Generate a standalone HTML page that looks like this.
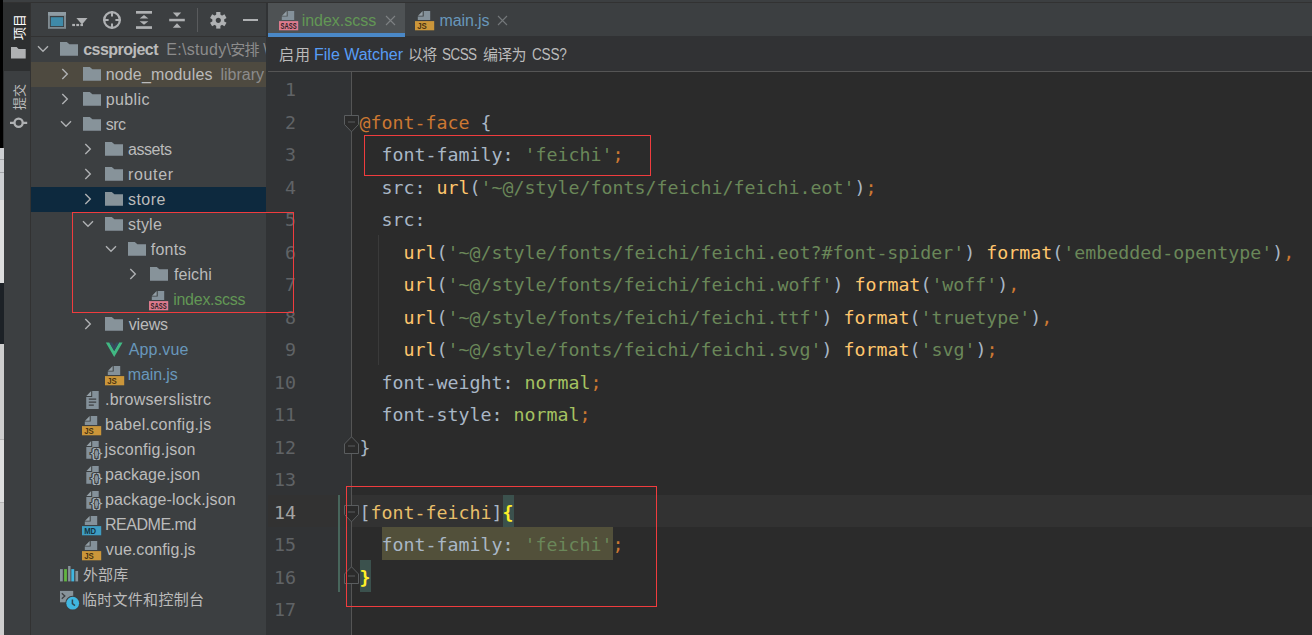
<!DOCTYPE html><html><head><meta charset="utf-8"><title>index.scss</title><style>
*{box-sizing:border-box;margin:0;padding:0}
html,body{width:1312px;height:635px;overflow:hidden;background:#3c3f41}
body{position:relative;font-family:"Liberation Sans","Noto Sans CJK SC",sans-serif;font-size:16px;color:#bbbbbb}
.abs{position:absolute}
svg{position:absolute;overflow:visible}
#edge{left:0;top:0;width:4px;height:635px;background:#cecece}
#stripe{left:4px;top:0;width:27px;height:635px;background:#3c3f41}
#proj{left:31px;top:0;width:235px;height:635px;background:#3c3f41;overflow:hidden}
#editor{left:266px;top:0;width:1046px;height:635px;background:#2b2b2b;overflow:hidden}
.t{position:absolute;white-space:pre;height:25px;line-height:25px}
.g{color:#8c8c8c}
.code{position:absolute;left:359.5px;height:32px;line-height:32px;font-family:"DejaVu Sans Mono","Liberation Mono",monospace;font-size:18.27px;white-space:pre;color:#a9b7c6}
.ln{position:absolute;left:266px;width:30px;text-align:right;height:32px;line-height:32px;font-family:"DejaVu Sans Mono","Liberation Mono",monospace;font-size:18.27px;color:#606366}
.k{color:#cc7832}.s{color:#6a8759}.f{color:#ffc66d}.v{color:#a5c261}.sel{color:#e8bf6a}
.red{position:absolute;border:1px solid #f03c3e}
.vt{position:absolute;white-space:nowrap;transform-origin:0 0;transform:rotate(-90deg);font-size:13px;line-height:16px;height:16px}
</style></head><body>
<div id="edge" class="abs"></div>
<div class="abs" style="left:0;top:0;width:4px;height:148px;background:#2c2e2f"></div>
<div class="abs" style="left:0;top:0;width:3px;height:148px;background:#000"></div>
<div class="abs" style="left:0;top:148px;width:4px;height:52px;background:#cdcfd2"></div>
<div class="abs" style="left:0;top:159px;width:4px;height:1px;background:#a3a5a8"></div>
<div class="abs" style="left:0;top:172px;width:4px;height:1px;background:#a3a5a8"></div>
<div class="abs" style="left:0;top:200px;width:4px;height:83px;background:#dedede"></div>
<div class="abs" style="left:0;top:283px;width:4px;height:61px;background:#1c2126"></div>
<div class="abs" style="left:0;top:439px;width:4px;height:63px;background:#dedede"></div>
<div class="abs" style="left:0;top:439px;width:4px;height:1px;background:#b5b5b5"></div>
<div class="abs" style="left:0;top:502px;width:4px;height:1px;background:#b5b5b5"></div>
<div id="stripe" class="abs"></div>
<div id="proj" class="abs"></div>
<div id="editor" class="abs"></div>
<div class="abs" style="left:31px;top:62px;width:235px;height:25px;background:#4e4a40"></div>
<div class="abs" style="left:31px;top:187px;width:235px;height:25px;background:#0d293e"></div>
<svg style="left:37.0px;top:45.2px" width="12" height="8" viewBox="0 0 12 8"><path d="M1 1.3L6 6.3L11 1.3" fill="none" stroke="#afb1b3" stroke-width="1.4"/></svg>
<svg style="left:60.0px;top:42.4px" width="18" height="14" viewBox="0 0 18 14"><path d="M0 0H6.8L9.4 2.3H18V13.8H0Z" fill="#87939a"/></svg>
<div class="t" style="left:83.18px;top:37px;letter-spacing:-0.520px;font-weight:bold;">cssproject</div>
<svg style="left:61.3px;top:68.2px" width="8" height="12" viewBox="0 0 8 12"><path d="M1.3 1L6.3 6L1.3 11" fill="none" stroke="#afb1b3" stroke-width="1.4"/></svg>
<svg style="left:82.5px;top:67.4px" width="18" height="14" viewBox="0 0 18 14"><path d="M0 0H6.8L9.4 2.3H18V13.8H0Z" fill="#87939a"/></svg>
<div class="t" style="left:105.68px;top:62px;letter-spacing:0.164px;">node_modules</div>
<svg style="left:61.3px;top:93.2px" width="8" height="12" viewBox="0 0 8 12"><path d="M1.3 1L6.3 6L1.3 11" fill="none" stroke="#afb1b3" stroke-width="1.4"/></svg>
<svg style="left:82.5px;top:92.4px" width="18" height="14" viewBox="0 0 18 14"><path d="M0 0H6.8L9.4 2.3H18V13.8H0Z" fill="#87939a"/></svg>
<div class="t" style="left:105.68px;top:87px;letter-spacing:0.396px;">public</div>
<svg style="left:59.5px;top:120.2px" width="12" height="8" viewBox="0 0 12 8"><path d="M1 1.3L6 6.3L11 1.3" fill="none" stroke="#afb1b3" stroke-width="1.4"/></svg>
<svg style="left:82.5px;top:117.4px" width="18" height="14" viewBox="0 0 18 14"><path d="M0 0H6.8L9.4 2.3H18V13.8H0Z" fill="#87939a"/></svg>
<div class="t" style="left:105.68px;top:112px;letter-spacing:-0.450px;">src</div>
<svg style="left:83.8px;top:143.2px" width="8" height="12" viewBox="0 0 8 12"><path d="M1.3 1L6.3 6L1.3 11" fill="none" stroke="#afb1b3" stroke-width="1.4"/></svg>
<svg style="left:105.0px;top:142.4px" width="18" height="14" viewBox="0 0 18 14"><path d="M0 0H6.8L9.4 2.3H18V13.8H0Z" fill="#87939a"/></svg>
<div class="t" style="left:128.00px;top:137px;letter-spacing:-0.468px;">assets</div>
<svg style="left:83.8px;top:168.2px" width="8" height="12" viewBox="0 0 8 12"><path d="M1.3 1L6.3 6L1.3 11" fill="none" stroke="#afb1b3" stroke-width="1.4"/></svg>
<svg style="left:105.0px;top:167.4px" width="18" height="14" viewBox="0 0 18 14"><path d="M0 0H6.8L9.4 2.3H18V13.8H0Z" fill="#87939a"/></svg>
<div class="t" style="left:128.00px;top:162px;letter-spacing:0.648px;">router</div>
<svg style="left:83.8px;top:193.2px" width="8" height="12" viewBox="0 0 8 12"><path d="M1.3 1L6.3 6L1.3 11" fill="none" stroke="#afb1b3" stroke-width="1.4"/></svg>
<svg style="left:105.0px;top:192.4px" width="18" height="14" viewBox="0 0 18 14"><path d="M0 0H6.8L9.4 2.3H18V13.8H0Z" fill="#87939a"/></svg>
<div class="t" style="left:128.00px;top:187px;letter-spacing:0.450px;">store</div>
<svg style="left:82.0px;top:220.2px" width="12" height="8" viewBox="0 0 12 8"><path d="M1 1.3L6 6.3L11 1.3" fill="none" stroke="#afb1b3" stroke-width="1.4"/></svg>
<svg style="left:105.0px;top:217.4px" width="18" height="14" viewBox="0 0 18 14"><path d="M0 0H6.8L9.4 2.3H18V13.8H0Z" fill="#87939a"/></svg>
<div class="t" style="left:128.00px;top:212px;letter-spacing:0.225px;">style</div>
<svg style="left:104.5px;top:245.2px" width="12" height="8" viewBox="0 0 12 8"><path d="M1 1.3L6 6.3L11 1.3" fill="none" stroke="#afb1b3" stroke-width="1.4"/></svg>
<svg style="left:127.5px;top:242.4px" width="18" height="14" viewBox="0 0 18 14"><path d="M0 0H6.8L9.4 2.3H18V13.8H0Z" fill="#87939a"/></svg>
<div class="t" style="left:150.86px;top:237px;letter-spacing:0.180px;">fonts</div>
<svg style="left:128.8px;top:268.2px" width="8" height="12" viewBox="0 0 8 12"><path d="M1.3 1L6.3 6L1.3 11" fill="none" stroke="#afb1b3" stroke-width="1.4"/></svg>
<svg style="left:150.0px;top:267.4px" width="18" height="14" viewBox="0 0 18 14"><path d="M0 0H6.8L9.4 2.3H18V13.8H0Z" fill="#87939a"/></svg>
<div class="t" style="left:173.90px;top:262px;letter-spacing:0.108px;">feichi</div>
<svg style="left:149.0px;top:291.0px" width="20" height="20" viewBox="0 0 20 20"><path d="M8.7 0H15.2V9.1H2.8V5.6H8.7Z" fill="#84919a"/><path d="M7.7 0V4.7H3Z" fill="#939fa6"/><rect x="0" y="10.1" width="19.2" height="9.2" fill="#de7b8e"/><text x="1.6" y="17.9" font-family="Liberation Sans,sans-serif" font-weight="bold" font-size="8.3" textLength="16.0" lengthAdjust="spacingAndGlyphs" fill="#2b2426">SASS</text></svg>
<div class="t" style="left:173.18px;top:287px;letter-spacing:-0.260px;color:#629755;">index.scss</div>
<svg style="left:83.8px;top:318.2px" width="8" height="12" viewBox="0 0 8 12"><path d="M1.3 1L6.3 6L1.3 11" fill="none" stroke="#afb1b3" stroke-width="1.4"/></svg>
<svg style="left:105.0px;top:317.4px" width="18" height="14" viewBox="0 0 18 14"><path d="M0 0H6.8L9.4 2.3H18V13.8H0Z" fill="#87939a"/></svg>
<div class="t" style="left:128.72px;top:312px;letter-spacing:-0.171px;">views</div>
<svg style="left:105.0px;top:340.0px" width="20" height="20" viewBox="0 0 20 20"><path d="M0.8 2.4H4.3L9.2 10.9L14.1 2.4H17.6L9.2 16.9Z" fill="#41b883"/><path d="M4.3 2.4H7.2L9.2 5.9L11.2 2.4H14.1L9.2 10.9Z" fill="#35495e"/></svg>
<div class="t" style="left:128.72px;top:337px;letter-spacing:0.150px;color:#6897bb;">App.vue</div>
<svg style="left:104.8px;top:366.0px" width="20" height="20" viewBox="0 0 20 20"><path d="M8.7 0H15.2V9.1H2.8V5.6H8.7Z" fill="#84919a"/><path d="M7.7 0V4.7H3Z" fill="#939fa6"/><rect x="0" y="10.1" width="19.2" height="9.2" fill="#cb963a"/><text x="2.2" y="17.9" font-family="Liberation Sans,sans-serif" font-weight="bold" font-size="8.3" textLength="9.6" lengthAdjust="spacingAndGlyphs" fill="#4a3412">JS</text></svg>
<div class="t" style="left:127.82px;top:362px;letter-spacing:-0.120px;color:#6897bb;">main.js</div>
<svg style="left:82.5px;top:390.8px" width="20" height="20" viewBox="0 0 20 20"><path d="M9.2 0H15.7V17.9H3.2V5.9H9.2Z" fill="#84919a"/><path d="M8.2 0V4.9H3.4Z" fill="#939fa6"/><path d="M5.8 8.2H13.2M5.8 11.2H13.2M5.8 14.2H10.8" stroke="#3c3f41" stroke-width="1.3"/></svg>
<div class="t" style="left:104.96px;top:387px;letter-spacing:0.280px;">.browserslistrc</div>
<svg style="left:82.3px;top:416.0px" width="20" height="20" viewBox="0 0 20 20"><path d="M8.7 0H15.2V9.1H2.8V5.6H8.7Z" fill="#84919a"/><path d="M7.7 0V4.7H3Z" fill="#939fa6"/><rect x="0" y="10.1" width="19.2" height="9.2" fill="#cb963a"/><text x="2.2" y="17.9" font-family="Liberation Sans,sans-serif" font-weight="bold" font-size="8.3" textLength="9.6" lengthAdjust="spacingAndGlyphs" fill="#4a3412">JS</text></svg>
<div class="t" style="left:104.96px;top:412px;letter-spacing:0.279px;">babel.config.js</div>
<svg style="left:82.5px;top:441.0px" width="20" height="20" viewBox="0 0 20 20"><path d="M9.2 0H15.7V17.7H3.3V5.9H9.2Z" fill="#84919a"/><path d="M8.2 0V4.9H3.5Z" fill="#939fa6"/><text x="7.6" y="16.2" font-family="Liberation Sans,sans-serif" font-size="13" textLength="11.8" lengthAdjust="spacingAndGlyphs" fill="#a9b3b9" stroke="#3c3f41" stroke-width="2" paint-order="stroke">{}</text><ellipse cx="13.5" cy="12.6" rx="1.7" ry="2.9" fill="#87939a"/></svg>
<div class="t" style="left:104.42px;top:437px;letter-spacing:0.255px;">jsconfig.json</div>
<svg style="left:82.5px;top:466.0px" width="20" height="20" viewBox="0 0 20 20"><path d="M9.2 0H15.7V17.7H3.3V5.9H9.2Z" fill="#84919a"/><path d="M8.2 0V4.9H3.5Z" fill="#939fa6"/><text x="7.6" y="16.2" font-family="Liberation Sans,sans-serif" font-size="13" textLength="11.8" lengthAdjust="spacingAndGlyphs" fill="#a9b3b9" stroke="#3c3f41" stroke-width="2" paint-order="stroke">{}</text><ellipse cx="13.5" cy="12.6" rx="1.7" ry="2.9" fill="#87939a"/></svg>
<div class="t" style="left:104.96px;top:462px;letter-spacing:0.082px;">package.json</div>
<svg style="left:82.5px;top:491.0px" width="20" height="20" viewBox="0 0 20 20"><path d="M9.2 0H15.7V17.7H3.3V5.9H9.2Z" fill="#84919a"/><path d="M8.2 0V4.9H3.5Z" fill="#939fa6"/><text x="7.6" y="16.2" font-family="Liberation Sans,sans-serif" font-size="13" textLength="11.8" lengthAdjust="spacingAndGlyphs" fill="#a9b3b9" stroke="#3c3f41" stroke-width="2" paint-order="stroke">{}</text><ellipse cx="13.5" cy="12.6" rx="1.7" ry="2.9" fill="#87939a"/></svg>
<div class="t" style="left:104.96px;top:487px;letter-spacing:0.164px;">package-lock.json</div>
<svg style="left:82.3px;top:516.0px" width="20" height="20" viewBox="0 0 20 20"><path d="M8.7 0H15.2V9.1H2.8V5.6H8.7Z" fill="#84919a"/><path d="M7.7 0V4.7H3Z" fill="#939fa6"/><rect x="0" y="10.1" width="19.2" height="9.2" fill="#3e9dc2"/><text x="2.2" y="17.9" font-family="Liberation Sans,sans-serif" font-weight="bold" font-size="8.3" textLength="12.0" lengthAdjust="spacingAndGlyphs" fill="#15323f">MD</text></svg>
<div class="t" style="left:104.96px;top:512px;letter-spacing:-0.466px;">README.md</div>
<svg style="left:82.3px;top:541.0px" width="20" height="20" viewBox="0 0 20 20"><path d="M8.7 0H15.2V9.1H2.8V5.6H8.7Z" fill="#84919a"/><path d="M7.7 0V4.7H3Z" fill="#939fa6"/><rect x="0" y="10.1" width="19.2" height="9.2" fill="#cb963a"/><text x="2.2" y="17.9" font-family="Liberation Sans,sans-serif" font-weight="bold" font-size="8.3" textLength="9.6" lengthAdjust="spacingAndGlyphs" fill="#4a3412">JS</text></svg>
<div class="t" style="left:105.86px;top:537px;letter-spacing:0.060px;">vue.config.js</div>
<svg style="left:59.9px;top:565.9px" width="19" height="16" viewBox="0 0 19 16"><rect x="0" y="3.1" width="2.8" height="12.3" fill="#87939a"/><rect x="4.1" y="3.1" width="2.8" height="12.3" fill="#62b543"/><rect x="8.1" y="0" width="2.4" height="15.4" fill="#87939a"/><rect x="11.3" y="3.1" width="2.9" height="12.3" fill="#40b6e0"/><rect x="15.4" y="5" width="2.7" height="10.4" fill="#87939a"/></svg>
<div class="t" style="left:83.00px;top:562px;letter-spacing:0.090px;font-size:15px;">外部库</div>
<svg style="left:59.9px;top:587.0px" width="20" height="24" viewBox="0 0 20 24"><rect x="0" y="3.9" width="13.2" height="11.4" fill="#87939a"/><path d="M1.8 6.3L4.8 9L1.8 11.7" fill="none" stroke="#3c3f41" stroke-width="1.3"/><circle cx="12.7" cy="16.2" r="7.5" fill="#3c3f41"/><circle cx="12.7" cy="16.2" r="6.4" fill="#40b6e0"/><path d="M12.4 12.6V16.6L15 18.6" fill="none" stroke="#2f4652" stroke-width="1.5"/></svg>
<div class="t" style="left:82.10px;top:587px;letter-spacing:0.257px;font-size:15px;">临时文件和控制台</div>
<div class="abs" style="left:160px;top:37px;width:106px;height:25px;overflow:hidden">
<div class="t" style="left:6.3px;top:0;color:#8c8c8c;letter-spacing:0.3px">E:\study\</div>
<div class="t" style="left:70.2px;top:0;color:#8c8c8c;font-size:15px;letter-spacing:-0.6px">安排</div>
<div class="t" style="left:103.3px;top:0;color:#8c8c8c">\</div>
</div>
<div class="abs" style="left:216px;top:62px;width:50px;height:25px;overflow:hidden">
<div class="t" style="left:4.44px;top:0.0px;letter-spacing:0.000px;color:#8c8c8c;">library root</div>
</div>
<div class="abs" style="left:3px;top:0;width:1309px;height:2px;background:#3c3f41"></div>
<div class="abs" style="left:3px;top:2px;width:1309px;height:1px;background:#323232"></div>
<div class="abs" style="left:31px;top:36px;width:235px;height:1px;background:#323232"></div>
<div class="abs" style="left:30px;top:3px;width:1px;height:632px;background:#323232"></div>
<svg style="left:48px;top:12px" width="18" height="17" viewBox="0 0 18 17"><rect width="18" height="16.8" fill="#7f8b91"/><rect width="18" height="3.4" fill="#8f9ca3"/><rect x="1.9" y="4" width="14.1" height="11" fill="#3c3f41"/><rect x="2.8" y="5.2" width="12.4" height="8.9" fill="#3f8aa8"/></svg>
<svg style="left:72px;top:17px" width="16" height="10" viewBox="0 0 16 10"><path d="M4.4 1H15.5L10 7.4Z" fill="#afb1b3"/><rect x="0.2" y="6.9" width="2.8" height="2.2" fill="#afb1b3"/><rect x="4.3" y="6.9" width="2.8" height="2.2" fill="#afb1b3"/><rect x="8.4" y="6.9" width="2.6" height="2.2" fill="#afb1b3"/></svg>
<svg style="left:103px;top:11px" width="18" height="18" viewBox="0 0 18 18"><circle cx="9" cy="9" r="7.85" fill="none" stroke="#afb1b3" stroke-width="2.3"/><path d="M9 0.5V5.6M9 12.4V17.5M0.5 9H5.6M12.4 9H17.5" stroke="#afb1b3" stroke-width="2"/></svg>
<svg style="left:136px;top:11px" width="16" height="18" viewBox="0 0 16 18"><rect x="0" y="0" width="16" height="2.7" fill="#afb1b3"/><rect x="0" y="15.2" width="16" height="2.7" fill="#afb1b3"/><path d="M8 4.1L12.4 7.6H3.6ZM8 13.8L12.4 10.2H3.6Z" fill="#afb1b3"/></svg>
<svg style="left:169px;top:11px" width="16" height="18" viewBox="0 0 16 18"><rect x="0.2" y="7.8" width="15.6" height="2.5" fill="#afb1b3"/><path d="M8 6L12.2 1.4H3.8ZM8 12.2L12.2 16.8H3.8Z" fill="#afb1b3"/></svg>
<div class="abs" style="left:197px;top:8px;width:1px;height:24px;background:#595b5d"></div>
<svg style="left:209.8px;top:11.8px" width="16.6" height="16.6" viewBox="-8.3 -8.3 16.6 16.6"><g fill="#afb1b3"><rect x="-2.1" y="-8.3" width="4.2" height="4.4" transform="rotate(0)"/><rect x="-2.1" y="-8.3" width="4.2" height="4.4" transform="rotate(60)"/><rect x="-2.1" y="-8.3" width="4.2" height="4.4" transform="rotate(120)"/><rect x="-2.1" y="-8.3" width="4.2" height="4.4" transform="rotate(180)"/><rect x="-2.1" y="-8.3" width="4.2" height="4.4" transform="rotate(240)"/><rect x="-2.1" y="-8.3" width="4.2" height="4.4" transform="rotate(300)"/></g><circle r="4.3" fill="none" stroke="#afb1b3" stroke-width="3.4"/></svg>
<div class="abs" style="left:242.5px;top:18.7px;width:15.2px;height:2.5px;background:#afb1b3"></div>
<div class="abs" style="left:3px;top:3px;width:27px;height:68px;background:#2d2f30"></div>
<div class="vt" style="left:11.5px;top:40px;color:#ffffff">项目</div>
<svg style="left:11.3px;top:47.1px" width="15" height="12" viewBox="0 0 15 12"><path d="M0 0H5.6L7.6 1.9H14.7V11.6H0Z" fill="#afb1b3"/></svg>
<div class="vt" style="left:11.5px;top:109.5px;color:#bbbbbb">提交</div>
<svg style="left:10px;top:116.5px" width="18" height="12" viewBox="0 0 18 12"><circle cx="8.6" cy="5.8" r="4.1" fill="none" stroke="#afb1b3" stroke-width="2.3"/><path d="M0 5.8H4.5M12.7 5.8H17.2" stroke="#afb1b3" stroke-width="2.3"/></svg>
<div class="abs" style="left:266px;top:3px;width:1046px;height:34px;background:#3c3f41"></div>
<div class="abs" style="left:266px;top:3px;width:2px;height:632px;background:#313335"></div>
<div class="abs" style="left:268px;top:3px;width:137px;height:30px;background:#4e5254"></div>
<div class="abs" style="left:268px;top:33px;width:137px;height:4px;background:#4a88c7"></div>
<svg style="left:279.0px;top:10.8px" width="20" height="20" viewBox="0 0 20 20"><path d="M8.7 0H15.2V9.1H2.8V5.6H8.7Z" fill="#84919a"/><path d="M7.7 0V4.7H3Z" fill="#939fa6"/><rect x="0" y="10.1" width="19.2" height="9.2" fill="#de7b8e"/><text x="1.6" y="17.9" font-family="Liberation Sans,sans-serif" font-weight="bold" font-size="8.3" textLength="16.0" lengthAdjust="spacingAndGlyphs" fill="#2b2426">SASS</text></svg>
<div class="t" style="left:301.70px;top:8.0px;letter-spacing:-0.020px;color:#629755;">index.scss</div>
<svg style="left:386px;top:15.5px" width="9" height="9" viewBox="0 0 9 9"><path d="M0 0L9 9M9 0L0 9" stroke="#7e8284" stroke-width="1.1"/></svg>
<svg style="left:414.7px;top:10.8px" width="20" height="20" viewBox="0 0 20 20"><path d="M8.7 0H15.2V9.1H2.8V5.6H8.7Z" fill="#84919a"/><path d="M7.7 0V4.7H3Z" fill="#939fa6"/><rect x="0" y="10.1" width="19.2" height="9.2" fill="#cb963a"/><text x="2.2" y="17.9" font-family="Liberation Sans,sans-serif" font-weight="bold" font-size="8.3" textLength="9.6" lengthAdjust="spacingAndGlyphs" fill="#4a3412">JS</text></svg>
<div class="t" style="left:439.44px;top:8.0px;letter-spacing:-0.090px;color:#6897bb;">main.js</div>
<svg style="left:498.3px;top:15.5px" width="9" height="9" viewBox="0 0 9 9"><path d="M0 0L9 9M9 0L0 9" stroke="#74787a" stroke-width="1.1"/></svg>
<div class="abs" style="left:268px;top:36px;width:1044px;height:35px;background:#313234"></div>
<div class="abs" style="left:268px;top:33px;width:137px;height:4px;background:#4a88c7"></div>
<div class="abs" style="left:268px;top:71px;width:1044px;height:1px;background:#555555"></div>
<div class="t" style="left:278.88px;top:42.0px;letter-spacing:1.080px;font-size:15px;">启用</div>
<div class="t" style="left:314.10px;top:42.0px;letter-spacing:-0.028px;color:#589df6;">File Watcher</div>
<div class="t" style="left:408.10px;top:42.0px;letter-spacing:-0.900px;font-size:15px;">以将</div>
<div class="t" style="left:442.24px;top:42.0px;letter-spacing:-0.600px;transform-origin:0 50%;transform:scaleX(0.840);">SCSS</div>
<div class="t" style="left:482.94px;top:42.0px;letter-spacing:-0.720px;font-size:15px;">编译为</div>
<div class="t" style="left:532.00px;top:42.0px;letter-spacing:-0.300px;transform-origin:0 50%;transform:scaleX(0.850);">CSS?</div>
<div class="abs" style="left:268px;top:72px;width:83px;height:563px;background:#313335"></div>
<div class="abs" style="left:351px;top:72px;width:1px;height:563px;background:#555555"></div>
<div class="abs" style="left:268px;top:495px;width:1044px;height:32px;background:#323232"></div>
<div class="abs" style="left:351px;top:495px;width:1px;height:32px;background:#555555"></div>
<div class="abs" style="left:502.5px;top:495px;width:11.0px;height:32px;background:#3b514d"></div>
<div class="abs" style="left:359.5px;top:560px;width:11.0px;height:32px;background:#3b514d"></div>
<div class="abs" style="left:381.5px;top:527px;width:231.0px;height:33px;background:#52503a"></div>
<div class="abs" style="left:338px;top:495px;width:1.6px;height:97px;background:#48665c"></div>
<div class="abs" style="left:378px;top:235px;width:1px;height:130px;background:#3a3a3a"></div>
<svg style="left:343.5px;top:114.7px" width="15" height="18" viewBox="0 0 15 18"><path d="M0.5 0.5H14.5V9.5L7.5 16.8L0.5 9.5Z" fill="#2b2b2b" stroke="#5a5d5f" stroke-width="1"/><path d="M4 7H11" stroke="#5a5d5f" stroke-width="1"/></svg>
<svg style="left:343.5px;top:436.3px" width="15" height="18" viewBox="0 0 15 18"><path d="M0.5 17.5H14.5V8L7.5 0.8L0.5 8Z" fill="#2b2b2b" stroke="#5a5d5f" stroke-width="1"/><path d="M4 10H11" stroke="#5a5d5f" stroke-width="1"/></svg>
<svg style="left:343.5px;top:504.7px" width="15" height="18" viewBox="0 0 15 18"><path d="M0.5 0.5H14.5V9.5L7.5 16.8L0.5 9.5Z" fill="#2b2b2b" stroke="#5a5d5f" stroke-width="1"/><path d="M4 7H11" stroke="#5a5d5f" stroke-width="1"/></svg>
<svg style="left:343.5px;top:566.3px" width="15" height="18" viewBox="0 0 15 18"><path d="M0.5 17.5H14.5V8L7.5 0.8L0.5 8Z" fill="#2b2b2b" stroke="#5a5d5f" stroke-width="1"/><path d="M4 10H11" stroke="#5a5d5f" stroke-width="1"/></svg>
<div class="ln" style="top:74.0px;color:#606366">1</div>
<div class="ln" style="top:107.0px;color:#606366">2</div>
<div class="code" style="top:107.0px"><span class="k">@font-face</span> {</div>
<div class="ln" style="top:139.0px;color:#606366">3</div>
<div class="code" style="top:139.0px">  font-family: <span class="s">'feichi'</span><span class="k">;</span></div>
<div class="ln" style="top:172.0px;color:#606366">4</div>
<div class="code" style="top:172.0px">  src: <span class="f">url</span>(<span class="s">'~@/style/fonts/feichi/feichi.eot'</span>)<span class="k">;</span></div>
<div class="ln" style="top:204.0px;color:#606366">5</div>
<div class="code" style="top:204.0px">  src:</div>
<div class="ln" style="top:237.0px;color:#606366">6</div>
<div class="code" style="top:237.0px">    <span class="f">url</span>(<span class="s">'~@/style/fonts/feichi/feichi.eot?#font-spider'</span>) <span class="f">format</span>(<span class="s">'embedded-opentype'</span>)<span class="k">,</span></div>
<div class="ln" style="top:269.0px;color:#606366">7</div>
<div class="code" style="top:269.0px">    <span class="f">url</span>(<span class="s">'~@/style/fonts/feichi/feichi.woff'</span>) <span class="f">format</span>(<span class="s">'woff'</span>)<span class="k">,</span></div>
<div class="ln" style="top:302.0px;color:#606366">8</div>
<div class="code" style="top:302.0px">    <span class="f">url</span>(<span class="s">'~@/style/fonts/feichi/feichi.ttf'</span>) <span class="f">format</span>(<span class="s">'truetype'</span>)<span class="k">,</span></div>
<div class="ln" style="top:334.0px;color:#606366">9</div>
<div class="code" style="top:334.0px">    <span class="f">url</span>(<span class="s">'~@/style/fonts/feichi/feichi.svg'</span>) <span class="f">format</span>(<span class="s">'svg'</span>)<span class="k">;</span></div>
<div class="ln" style="top:367.0px;color:#606366">10</div>
<div class="code" style="top:367.0px">  font-weight: <span class="v">normal</span><span class="k">;</span></div>
<div class="ln" style="top:399.0px;color:#606366">11</div>
<div class="code" style="top:399.0px">  font-style: <span class="v">normal</span><span class="k">;</span></div>
<div class="ln" style="top:432.0px;color:#606366">12</div>
<div class="code" style="top:432.0px">}</div>
<div class="ln" style="top:464.0px;color:#606366">13</div>
<div class="ln" style="top:497.0px;color:#a4a3a3">14</div>
<div class="code" style="top:497.0px">[<span class="sel">font-feichi</span>]<span style="color:#ffef28;font-weight:bold">{</span></div>
<div class="ln" style="top:529.0px;color:#606366">15</div>
<div class="code" style="top:529.0px">  font-family: <span class="s">'feichi'</span><span class="k">;</span></div>
<div class="ln" style="top:562.0px;color:#606366">16</div>
<div class="code" style="top:562.0px"><span style="color:#ffef28;font-weight:bold">}</span></div>
<div class="ln" style="top:594.0px;color:#606366">17</div>
<div class="red" style="left:72px;top:212px;width:222px;height:101px"></div>
<div class="red" style="left:364px;top:135px;width:287px;height:41px"></div>
<div class="red" style="left:346px;top:486px;width:311px;height:121px"></div>
</body></html>
